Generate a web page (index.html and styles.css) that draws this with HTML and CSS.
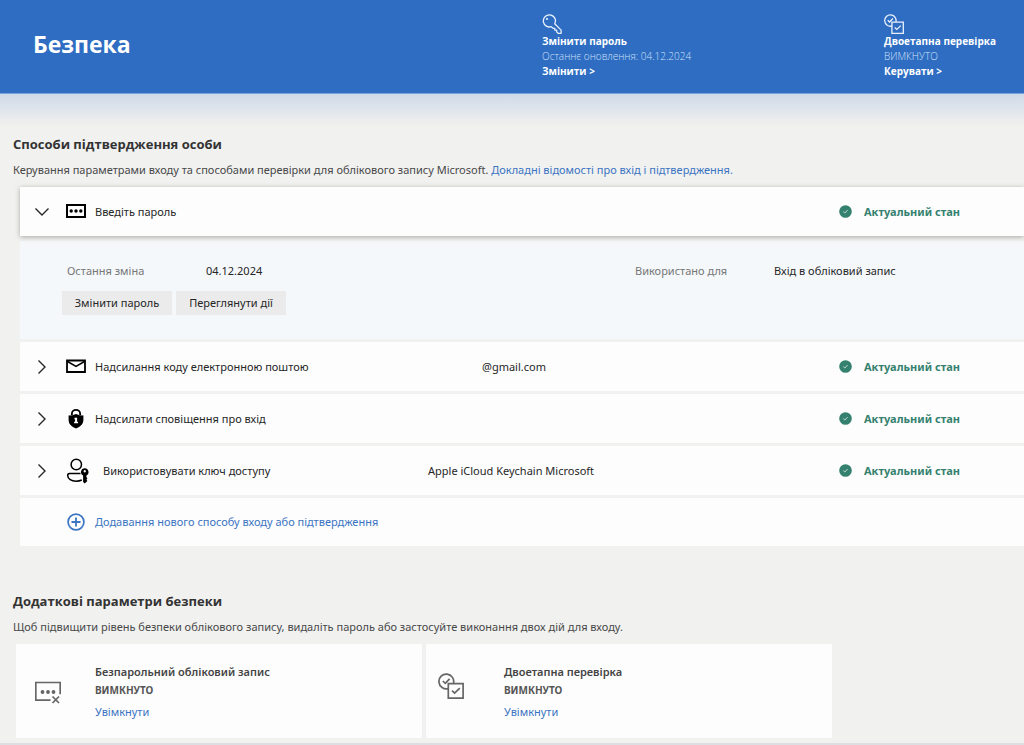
FILE: index.html
```html
<!DOCTYPE html>
<html lang="uk">
<head>
    <meta charset="UTF-8">
    <meta name="viewport" content="width=device-width, initial-scale=1.0">
    <title>Безпека</title>
    <link rel="stylesheet" href="styles.css">
</head>
<body>
    <!-- Shared icons -->
    <svg class="sprite" aria-hidden="true">
        <symbol id="chevron" viewBox="0 0 16 16">
            <path d="M4.5 1.500l6.500 6.500-6.500 6.500" fill="none" stroke="currentColor" stroke-width="1.4"/>
        </symbol>
        <symbol id="status-ok" viewBox="0 0 13 13">
            <circle cx="6.5" cy="6.5" r="6.3" fill="currentColor"/>
            <path d="M4.3 6.6l1.5 1.4 2.8-2.9" fill="none" stroke="#d5e8e2" stroke-width="0.9"/>
        </symbol>
        <symbol id="two-step" viewBox="0 0 26 26">
            <g fill="none" stroke="currentColor" stroke-width="1.7">
                <path d="M10.3 15.6A7.4 7.4 0 1 1 15.4 10.6"/>
                <path d="M10.3 10.6h14.8v14.5H10.3z"/>
                <path d="M4.8 8l2.5 2.4 4.3-4.5M14 17.6l2.6 2.5 5.2-5"/>
            </g>
        </symbol>
    </svg>

    <header class="banner">
        <h1>Безпека</h1>
        <div class="banner-item">
            <svg class="banner-icon" viewBox="0 0 20 20" aria-hidden="true">
                <path d="M7 .8a6.1 6.1 0 1 0 2.3 11.9l1.8 1.6h1.7v1.9h1.9v1.7l1.4 1.4h3v-3.2l-6.4-6.3A6.1 6.1 0 0 0 7 .8z" fill="none" stroke="currentColor" stroke-width="1.3" stroke-linejoin="round"/>
                <circle cx="5" cy="5" r="1.1" fill="currentColor"/>
            </svg>
            <strong>Змінити пароль</strong>
            <span>Останнє оновлення: 04.12.2024</span>
            <a href="#">Змінити &gt;</a>
        </div>
        <div class="banner-item">
            <svg class="banner-icon" aria-hidden="true"><use href="#two-step"/></svg>
            <strong>Двоетапна перевірка</strong>
            <span>ВИМКНУТО</span>
            <a href="#">Керувати &gt;</a>
        </div>
    </header>

    <main>
        <section class="methods">
            <h2>Способи підтвердження особи</h2>
            <p>Керування параметрами входу та способами перевірки для облікового запису Microsoft. <a href="#">Докладні відомості про вхід і підтвердження.</a></p>

            <div class="method-list">
                <button class="method open" aria-expanded="true" aria-controls="password-details">
                    <svg class="chevron" aria-hidden="true"><use href="#chevron"/></svg>
                    <svg class="method-icon" viewBox="0 0 20 20" aria-hidden="true">
                        <path d="M1 3h18v12H1z" fill="none" stroke="currentColor" stroke-width="2"/>
                        <circle cx="5.2" cy="9" r="1.7"/><circle cx="10" cy="9" r="1.7"/><circle cx="14.8" cy="9" r="1.7"/>
                    </svg>
                    <span class="method-name">Введіть пароль</span>
                    <span class="method-value"></span>
                    <span class="status"><svg aria-hidden="true"><use href="#status-ok"/></svg>Актуальний стан</span>
                </button>

                <div class="details" id="password-details">
                    <dl>
                        <div><dt>Остання зміна</dt><dd>04.12.2024</dd></div>
                        <div><dt>Використано для</dt><dd>Вхід в обліковий запис</dd></div>
                    </dl>
                    <div class="actions">
                        <button>Змінити пароль</button>
                        <button>Переглянути дії</button>
                    </div>
                </div>

                <button class="method" aria-expanded="false">
                    <svg class="chevron" aria-hidden="true"><use href="#chevron"/></svg>
                    <svg class="method-icon" viewBox="0 0 20 20" aria-hidden="true">
                        <path d="M1 3.500h18v11.500H1z" fill="none" stroke="currentColor" stroke-width="1.800"/>
                        <path d="M1.500 4.500l8.500 5 8.500-5" fill="none" stroke="currentColor" stroke-width="1.500"/>
                    </svg>
                    <span class="method-name">Надсилання коду електронною поштою</span>
                    <span class="method-value email">@gmail.com</span>
                    <span class="status"><svg aria-hidden="true"><use href="#status-ok"/></svg>Актуальний стан</span>
                </button>

                <button class="method" aria-expanded="false">
                    <svg class="chevron" aria-hidden="true"><use href="#chevron"/></svg>
                    <svg class="method-icon" viewBox="0 0 20 20" aria-hidden="true">
                        <path d="M5.900 6V4.500a4.100 3.600 0 0 1 8.200 0V6" fill="none" stroke="currentColor" stroke-width="1.800"/>
                        <path d="M2.600 6.600Q6.500 6.600 10 4.900 13.500 6.600 17.400 6.600V10.800C17.400 15.200 14.500 17.600 10 19.600 5.500 17.600 2.600 15.200 2.600 10.800z"/>
                        <path d="M8.500 8.800h2.600v4h1v1.500H8.100v-1.500h1v-2.300h-.6z" fill="#fff"/>
                    </svg>
                    <span class="method-name">Надсилати сповіщення про вхід</span>
                    <span class="method-value"></span>
                    <span class="status"><svg aria-hidden="true"><use href="#status-ok"/></svg>Актуальний стан</span>
                </button>

                <button class="method passkey" aria-expanded="false">
                    <svg class="chevron" aria-hidden="true"><use href="#chevron"/></svg>
                    <svg class="method-icon" viewBox="0 0 24 26" aria-hidden="true">
                        <g fill="none" stroke="currentColor" stroke-width="1.500">
                            <circle cx="10.300" cy="6.500" r="5.200"/>
                            <path d="M14.500 15.500H3.500A2 2 0 0 0 1.700 17.600C1.700 21 5.500 23.200 10 23.200c2.100 0 4.200-.4 5.800-1.200"/>
                        </g>
                        <path fill-rule="evenodd" d="M18.700 10.300a3.800 3.800 0 0 1 1.700 7.200v1.600l1 1.300-1 1.300 1 1.300-2.700 2.500-1.600-1.500v-6.500a3.800 3.800 0 0 1 1.600-7.200zm0 1.700a1.200 1.200 0 1 0 .1 0z"/>
                    </svg>
                    <span class="method-name">Використовувати ключ доступу</span>
                    <span class="method-value">Apple iCloud Keychain Microsoft</span>
                    <span class="status"><svg aria-hidden="true"><use href="#status-ok"/></svg>Актуальний стан</span>
                </button>

                <a class="add-method" href="#">
                    <svg viewBox="0 0 18 18" aria-hidden="true">
                        <path d="M9 4.500v9M4.500 9h9" stroke="currentColor" stroke-width="1.800"/>
                        <circle cx="9" cy="9" r="7.900" fill="none" stroke="currentColor" stroke-width="1.700"/>
                    </svg>
                    Додавання нового способу входу або підтвердження
                </a>
            </div>
        </section>

        <section class="extra">
            <h2>Додаткові параметри безпеки</h2>
            <p>Щоб підвищити рівень безпеки облікового запису, видаліть пароль або застосуйте виконання двох дій для входу.</p>

            <div class="cards">
                <article class="card">
                    <svg class="card-icon" viewBox="0 0 26 26" aria-hidden="true">
                        <g fill="none" stroke="currentColor" stroke-width="1.700">
                            <path d="M15.500 22.200H.8V4.500h24.400v11.700"/>
                            <path d="M17.500 18.500l6.500 6.500M24 18.500l-6.500 6.500"/>
                        </g>
                        <g fill="currentColor"><circle cx="7.500" cy="14" r="1.900"/><circle cx="13" cy="14" r="1.900"/><circle cx="18.500" cy="14" r="1.900"/></g>
                    </svg>
                    <div>
                        <h3>Безпарольний обліковий запис</h3>
                        <strong>ВИМКНУТО</strong>
                        <a href="#">Увімкнути</a>
                    </div>
                </article>
                <article class="card two-step">
                    <svg class="card-icon" aria-hidden="true"><use href="#two-step"/></svg>
                    <div>
                        <h3>Двоетапна перевірка</h3>
                        <strong>ВИМКНУТО</strong>
                        <a href="#">Увімкнути</a>
                    </div>
                </article>
            </div>
        </section>
    </main>
    <footer></footer>
</body>
</html>
```
FILE: styles.css
```css
* {
    box-sizing: border-box;
}
body {
    margin: 0;
    background: #f1f1f0;
    color: #262626;
    font-family: "Noto Sans", "Open Sans", sans-serif;
    font-size: 11px;
    line-height: 16px;
}
h1, h2, h3, p, dl, dd {
    margin: 0;
}
h1, h2, .banner-item {
    font-family: "Open Sans", "Noto Sans", sans-serif;
}
a {
    color: #3b74c2;
    text-decoration: none;
}
a:hover {
    text-decoration: underline;
}
button {
    font: inherit;
    color: inherit;
    border: 0;
    cursor: pointer;
}
.sprite {
    display: none;
}

/* Blue banner */
.banner {
    display: grid;
    grid-template-columns: 1fr 342px 140px;
    padding: 14px 0 14px 33px;
    background: #2e6dc2;
    border-bottom: 1px solid #79a3dd;
    color: #fff;
}
.banner h1 {
    align-self: center;
    font-size: 23px;
    line-height: 28px;
    padding-bottom: 6px;
}
.banner-item {
    display: flex;
    flex-direction: column;
    align-items: flex-start;
    font-size: 10px;
    line-height: 15px;
}
.banner-item span {
    color: #cfe0f8;
    font-weight: 300;
}
.banner-item a {
    color: #fff;
    font-weight: bold;
}
.banner-icon {
    width: 20px;
    height: 20px;
    color: #e8f0fb;
}

main {
    padding-top: 40px;
    background: linear-gradient(#cfdae8, #dde4ed 14px, #ececed 26px, #f1f1f0 33px) no-repeat 0 0 / 100% 33px;
}
h2 {
    font-size: 13px;
    line-height: 20px;
    color: #333;
}
.methods h2, .methods p, .extra h2, .extra p {
    margin-left: 13px;
}
.methods p, .extra p {
    margin-top: 8px;
    color: #484848;
}

/* Sign-in methods */
.method-list {
    display: flex;
    flex-direction: column;
    gap: 3px;
    margin: 9px 0 0 20px;
}
.method {
    display: grid;
    grid-template-columns: 23px 20px 324px 1fr 185px;
    column-gap: 9px;
    align-items: center;
    height: 49px;
    padding: 0 0 0 14px;
    background: #fdfdfd;
    text-align: left;
}
.method.open {
    position: relative;
    margin-bottom: 2px;
    box-shadow: 0 1px 5px rgba(0, 0, 0, 0.3);
}
.chevron {
    width: 16px;
    height: 16px;
}
.open .chevron {
    transform: rotate(90deg);
}
.method-icon {
    width: 20px;
    height: 20px;
    color: #000;
}
.passkey .method-icon {
    width: 24px;
    height: 26px;
}
.passkey .method-name {
    padding-left: 8px;
}
/* the mailbox name is hidden, only the domain shows */
.email {
    padding-left: 54px;
}
.status {
    display: flex;
    align-items: center;
    gap: 12px;
    color: #35816f;
    font-weight: bold;
}
.status svg {
    width: 13px;
    height: 13px;
}

.details {
    padding: 22px 0 24px 42px;
    background: #f4f8fb;
}
.details dl {
    display: grid;
    grid-template-columns: 568px 1fr;
    padding-left: 5px;
}
.details dl div {
    display: grid;
    grid-template-columns: 139px 1fr;
}
.details dt {
    color: #767676;
}
.actions {
    display: flex;
    gap: 4px;
    margin-top: 12px;
}
.actions button {
    height: 24px;
    min-width: 110px;
    padding: 0 10px;
    background: #ebebeb;
}

.add-method {
    display: flex;
    align-items: center;
    gap: 10px;
    height: 48px;
    padding-left: 47px;
    background: #fdfdfd;
}
.add-method svg {
    width: 18px;
    height: 18px;
}

/* Additional security */
.extra {
    margin-top: 45px;
    padding-bottom: 5px;
}
.cards {
    display: grid;
    grid-template-columns: 1fr 1fr;
    gap: 4px;
    width: 80%;
    max-width: 816px;
    margin: 9px 0 0 16px;
}
.card {
    display: flex;
    align-items: center;
    gap: 34px;
    height: 94px;
    padding-left: 19px;
    background: #fdfdfd;
    border-radius: 1px;
}
.two-step {
    gap: 40px;
    padding-left: 12px;
}
.two-step .card-icon {
    margin-bottom: 10px;
}
.card-icon {
    width: 26px;
    height: 26px;
    color: #666;
}
.card div {
    display: flex;
    flex-direction: column;
    align-items: flex-start;
}
.card h3 {
    font-size: 11px;
    line-height: 20px;
    font-weight: 600;
    color: #444;
}
.card strong {
    font-size: 10px;
    color: #555;
}
.card a {
    margin-top: 6px;
}
footer {
    height: 2px;
    border-top: 2px solid #dcdee1;
}
```
